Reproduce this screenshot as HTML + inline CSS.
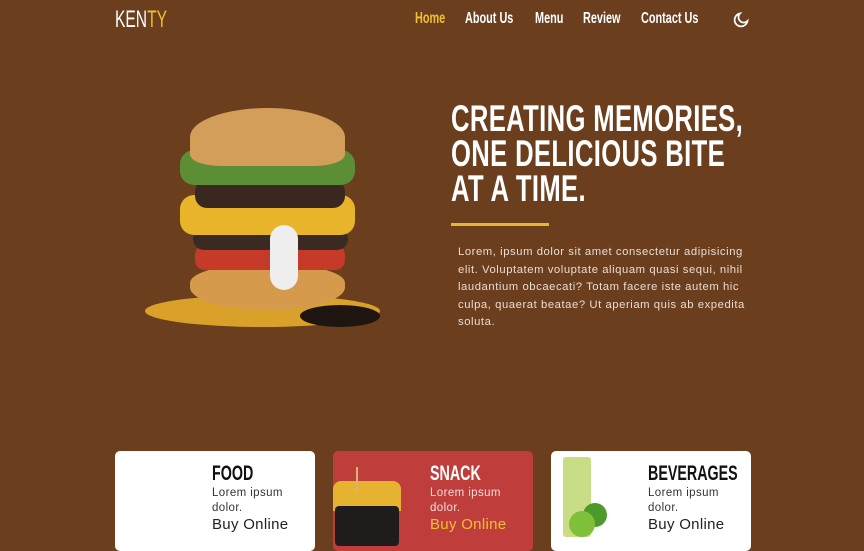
<!DOCTYPE html>
<html><head><meta charset="utf-8"><style>
*{margin:0;padding:0;box-sizing:border-box}
body{width:864px;height:535px;overflow:hidden;background:#6b3e1d;font-family:"Liberation Sans",sans-serif;position:relative}
.c{display:inline-block;transform-origin:0 0;white-space:nowrap}
.logo{position:absolute;left:115px;top:6px;font-size:24px;color:#fff;transform:scaleX(0.65)}
.logo span{color:#f0c02e}
nav{position:absolute;top:10px;left:415px;font-size:16px;color:#fff;font-weight:bold}
nav a{position:absolute;white-space:nowrap;transform:scaleX(0.68);transform-origin:0 0}
h1{position:absolute;left:451px;top:101px;color:#fff;font-size:37px;line-height:35px;font-weight:bold;letter-spacing:0.5px;white-space:nowrap;transform:scaleX(0.693);transform-origin:0 0}
.line{position:absolute;left:451px;top:223px;width:98px;height:3px;background:#e6b62e}
.p{position:absolute;left:458px;top:244px;width:296px;color:#e9ddd2;font-size:11.3px;line-height:17.6px;letter-spacing:0.55px}
.card{position:absolute;top:451px;width:200px;height:100px;background:#fff;border-radius:5px;overflow:hidden}
.card h3{position:absolute;left:97px;top:11px;font-size:21px;font-weight:bold;color:#111;transform:scaleX(0.68);transform-origin:0 0;white-space:nowrap}
.card .d{position:absolute;left:97px;top:35px;font-size:11.5px;line-height:14.5px;color:#333;width:90px;letter-spacing:0.4px}
.card .b{position:absolute;left:97px;top:65px;font-size:15px;color:#222;letter-spacing:0.3px}
</style></head><body>
<div class="logo c">KEN<span>TY</span></div>
<nav><a style="left:0;color:#f0c02e">Home</a><a style="left:50px">About Us</a><a style="left:120px">Menu</a><a style="left:168px">Review</a><a style="left:226px">Contact Us</a></nav>
<svg style="position:absolute;left:733px;top:12px" width="16" height="16" viewBox="0 0 16 16"><path d="M7 1.5A6.5 6.5 0 1 0 14.5 9 5 5 0 0 1 7 1.5Z" fill="none" stroke="#fff" stroke-width="1.7"/></svg>
<div style="position:absolute;left:145px;top:295px;width:235px;height:32px;border-radius:50%;background:#d9a12a"></div>
<div style="position:absolute;left:300px;top:305px;width:80px;height:22px;border-radius:50%;background:#1e1410"></div>
<div style="position:absolute;left:190px;top:265px;width:155px;height:45px;border-radius:40% 40% 50% 50%;background:#d59a4b"></div>
<div style="position:absolute;left:195px;top:245px;width:150px;height:25px;border-radius:10px;background:#c63a2a"></div>
<div style="position:absolute;left:193px;top:228px;width:155px;height:22px;border-radius:12px;background:#3b2a22"></div>
<div style="position:absolute;left:180px;top:195px;width:175px;height:40px;border-radius:14px;background:#e7b42a"></div>
<div style="position:absolute;left:195px;top:180px;width:150px;height:28px;border-radius:12px;background:#3a2720"></div>
<div style="position:absolute;left:180px;top:150px;width:175px;height:35px;border-radius:14px;background:#5b8e35"></div>
<div style="position:absolute;left:190px;top:108px;width:155px;height:58px;border-radius:50% 50% 20% 20%;background:#d39d5a"></div>
<div style="position:absolute;left:270px;top:225px;width:28px;height:65px;border-radius:14px;background:#eee"></div>
<h1>CREATING MEMORIES,<br>ONE DELICIOUS BITE<br>AT A TIME.</h1>
<div class="line"></div>
<div class="p">Lorem, ipsum dolor sit amet consectetur adipisicing elit. Voluptatem voluptate aliquam quasi sequi, nihil laudantium obcaecati? Totam facere iste autem hic culpa, quaerat beatae? Ut aperiam quis ab expedita soluta.</div>
<div class="card" style="left:115px"><h3>FOOD</h3><div class="d">Lorem ipsum dolor.</div><div class="b">Buy Online</div></div>
<div class="card" style="left:333px;background:#bf3e3b"><div style="position:absolute;left:0;top:30px;width:68px;height:30px;background:#e5b330;border-radius:8px 8px 0 0"></div><div style="position:absolute;left:2px;top:55px;width:64px;height:40px;background:#1f1c1b;border-radius:4px"></div><div style="position:absolute;left:23px;top:16px;width:2px;height:25px;background:#d8b37a"></div><h3 style="color:#fff">SNACK</h3><div class="d" style="color:#f2dddd">Lorem ipsum dolor.</div><div class="b" style="color:#f1c232">Buy Online</div></div>
<div class="card" style="left:551px"><div style="position:absolute;left:12px;top:6px;width:28px;height:80px;background:#c9dc86;border-radius:3px"></div><div style="position:absolute;left:32px;top:52px;width:24px;height:24px;background:#4c9a2a;border-radius:50%"></div><div style="position:absolute;left:18px;top:60px;width:26px;height:26px;background:#7ec03a;border-radius:50%"></div><h3>BEVERAGES</h3><div class="d">Lorem ipsum dolor.</div><div class="b">Buy Online</div></div>
</body></html>
